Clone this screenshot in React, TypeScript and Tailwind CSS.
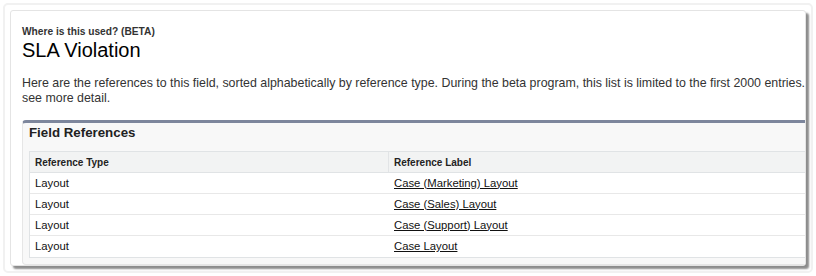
const rows = [
  { type: "Layout", label: "Case (Marketing) Layout" },
  { type: "Layout", label: "Case (Sales) Layout" },
  { type: "Layout", label: "Case (Support) Layout" },
  { type: "Layout", label: "Case Layout" },
];

export default function App() {
  return (
    <div className="w-[816px] h-[276px] bg-white p-[3px] font-['Liberation_Sans',Arial,sans-serif] text-[#222]">
      <div className="h-full rounded-[5px] border-2 border-[#f1f1f1] pl-[5px] pt-[5px]">
        <div className="w-[796px] h-[256px] overflow-hidden rounded-[3px] border border-[#e4e4e4] bg-white pl-[11px] pt-[15px] shadow-[3px_3px_2px_rgba(0,0,0,0.45)]">
          <div className="text-[10.2px] leading-[12px] font-bold text-[#333]">Where is this used? (BETA)</div>
          <h1 className="mt-[1px] text-[20px] leading-[22px] text-black">SLA Violation</h1>

          <p className="mt-[15px] whitespace-nowrap text-[12.4px] leading-[15px] text-[#333]">
            Here are the references to this field, sorted alphabetically by reference type. During the beta program, this list is limited to the first 2000 entries.
            <br />
            see more detail.
          </p>

          <div className="mt-[14px] w-[820px] rounded-[4px] border border-[#e6e6e6] border-t-[3px] border-t-[#7d869c] bg-[#f8f8f8] pb-[6px] pl-[6px]">
            <h2 className="pt-[2px] text-[13.3px] leading-[16px] font-bold text-[#222]">Field References</h2>

            <div className="mt-[10px] border border-[#e0e3e5] bg-white">
              <div className="flex h-[21px] border-b border-[#e0e3e5] bg-[#f2f3f3] text-[10px] font-bold text-[#222]">
                <div className="flex w-[359px] items-center border-r border-[#e2e4e6] pl-[5px]">Reference Type</div>
                <div className="flex flex-1 items-center pl-[5px]">Reference Label</div>
              </div>
              {rows.map((row, i) => (
                <div
                  key={i}
                  className={`flex h-[21px] text-[11.3px] text-[#111] ${i < rows.length - 1 ? "border-b border-[#e8e8e8]" : ""}`}
                >
                  <div className="flex w-[360px] items-center pl-[5px]">{row.type}</div>
                  <div className="flex flex-1 items-center pl-[4px]">
                    <a href="#" className="underline">{row.label}</a>
                  </div>
                </div>
              ))}
            </div>
          </div>
        </div>
      </div>
    </div>
  );
}
